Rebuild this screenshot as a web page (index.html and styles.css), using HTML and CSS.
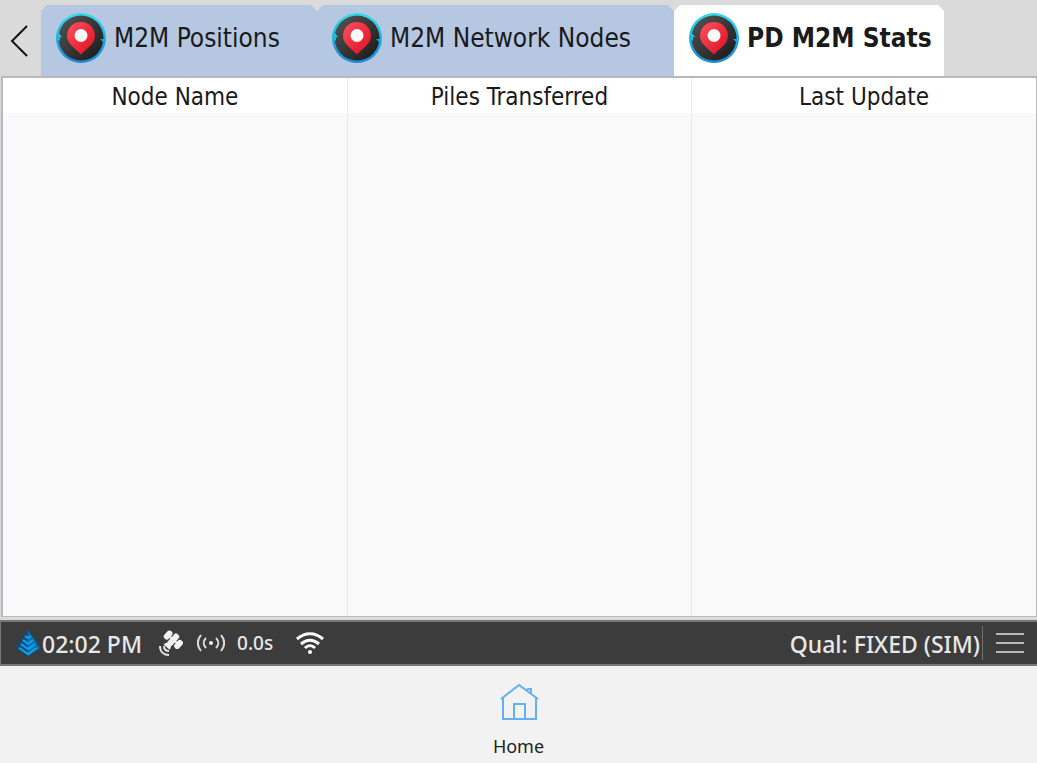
FILE: index.html
```
<!DOCTYPE html>
<html lang="en">
<head>
    <meta charset="UTF-8">
    <meta name="viewport" content="width=device-width, initial-scale=1.0">
    <title>PD M2M Stats</title>
    <link rel="stylesheet" href="styles.css">
</head>
<body>
    <!-- Shared icon for the tabs -->
    <svg class="defs" width="0" height="0" aria-hidden="true">
        <defs>
            <linearGradient id="ringFill" x1="0" y1="0" x2="0" y2="1">
                <stop offset="0" stop-color="#35dcec"/>
                <stop offset="0.5" stop-color="#18b4dc"/>
                <stop offset="1" stop-color="#1c86d6"/>
            </linearGradient>
            <linearGradient id="dialFill" x1="0" y1="0" x2="1" y2="1">
                <stop offset="0.1" stop-color="#505050"/>
                <stop offset="0.9" stop-color="#1e1e1e"/>
            </linearGradient>
            <linearGradient id="pinFill" x1="0" y1="0" x2="1" y2="1">
                <stop offset="0" stop-color="#ff5060"/>
                <stop offset="0.8" stop-color="#e31b2b"/>
            </linearGradient>
            <symbol id="pin" viewBox="0 0 50 50">
                <circle cx="25" cy="25" r="25" fill="url(#ringFill)"/>
                <circle cx="25" cy="25" r="22.500" fill="url(#dialFill)"/>
                <path d="M2 19l4 5-4 1zM1 25l3 0 0 3z" fill="#20c4e4"/>
                <path d="M49 31l-5-5 5 0z" fill="#18a8dc"/>
                <path d="M25 9C17 9 11 15 11 23c0 8 8 12 14 18.500C31 35 39 31 39 23 39 15 33 9 25 9z" fill="url(#pinFill)"/>
                <circle cx="25" cy="22.500" r="6.500" fill="#f8f8f8"/>
            </symbol>
        </defs>
    </svg>

    <header class="tab-bar">
        <button class="back" type="button" aria-label="Back">
            <svg width="18" height="32" viewBox="0 0 18 32"><path d="M17 1L2 16l15 15"/></svg>
        </button>
        <nav class="tabs">
            <button class="tab" type="button"><svg class="tab-icon"><use href="#pin"/></svg>M2M Positions</button>
            <button class="tab" type="button"><svg class="tab-icon"><use href="#pin"/></svg>M2M Network Nodes</button>
            <button class="tab active" type="button"><svg class="tab-icon"><use href="#pin"/></svg>PD M2M Stats</button>
        </nav>
    </header>

    <main class="panel">
        <table class="stats">
            <thead>
                <tr><th>Node Name</th><th>Piles Transferred</th><th>Last Update</th></tr>
            </thead>
            <tbody>
                <tr><td></td><td></td><td></td></tr>
            </tbody>
        </table>
    </main>

    <section class="status-bar">
        <svg class="logo" width="24" height="26" viewBox="0 0 24 26">
            <path d="M12 0L24 18 12 26 0 18z" fill="#0a4f8c"/>
            <path d="M12 0L24 18 12 26z" fill="#0870b0"/>
            <path d="M9 6l3 2 3-2M7 10l5 4 5-4M5 14l7 5 7-5M3 18l9 6 9-6" fill="none" stroke="#10a4ec" stroke-width="2"/>
        </svg>
        <span class="clock">02:02 PM</span>
        <svg class="satellite" width="26" height="26" viewBox="0 0 26 26">
            <g transform="rotate(42 16 9)" fill="#f2f2f2">
                <rect x="6" y="5" width="6" height="10" rx="3"/>
                <rect x="13" y="3" width="6" height="14" rx="2"/>
                <rect x="20" y="5" width="6" height="10" rx="3"/>
                <path d="M11 9h10v2H11zM12 20c0-6 8-6 8 0z"/>
            </g>
            <path d="M6 16c0 3 2 5 5 5M2 16c0 6 4 9 9 9" fill="none" stroke="#e4e4e4" stroke-width="2"/>
        </svg>
        <svg class="radio" width="28" height="18" viewBox="0 0 28 18">
            <circle cx="14" cy="9" r="2" fill="#eee"/>
            <path d="M9 4c-3 3-3 7 0 10M19 4c3 3 3 7 0 10M4 1c-4 5-4 11 0 16M24 1c4 5 4 11 0 16" fill="none" stroke="#ddd" stroke-width="2"/>
        </svg>
        <span class="latency">0.0s</span>
        <svg class="wifi" width="28" height="22" viewBox="0 0 28 22">
            <path d="M1 7c8-7 18-7 26 0M5 12c6-5 12-5 18 0M9 16c3-3 7-3 10 0" fill="none" stroke="#fff" stroke-width="3"/>
            <circle cx="14" cy="20" r="2" fill="#fff"/>
        </svg>
        <span class="quality">Qual: FIXED (SIM)</span>
        <button class="menu" type="button" aria-label="Menu">
            <svg width="28" height="22" viewBox="0 0 28 22"><path d="M0 2h28M0 11h28M0 20h28"/></svg>
        </button>
    </section>

    <footer class="bottom-bar">
        <a class="home" href="#">
            <svg width="40" height="38" viewBox="0 0 40 38">
                <path d="M2 16L20 2l19 14M4 15v21h33V15M15 36V21h11v15M28 7l1-1h3v5"/>
            </svg>
            Home
        </a>
    </footer>
</body>
</html>
```

FILE: styles.css
```
* {
    box-sizing: border-box;
}
body {
    margin: 0;
    min-height: 100vh;
    display: flex;
    flex-direction: column;
    background: #dadada;
    color: #1a1a1a;
    font-family: "DejaVu Sans Condensed", "Noto Sans", sans-serif;
}
button {
    border: none;
    padding: 0;
    background: none;
    color: inherit;
    font: inherit;
    cursor: pointer;
}
.defs {
    position: absolute;
}
.tab-bar {
    display: flex;
    height: 76px;
    padding-top: 5px;
}
.back {
    width: 41px;
}
.back svg {
    display: block;
    margin-left: 10px;
    fill: none;
    stroke: #111;
    stroke-width: 2;
}
.tabs {
    display: grid;
    grid-template-columns: 276px 357px 270px;
}
.tab {
    display: flex;
    align-items: center;
    gap: 8px;
    padding: 0 0 5px 15px;
    background: #b6c7e2;
    font-size: 26px;
    white-space: nowrap;
    clip-path: polygon(0 6px, 6px 0, calc(100% - 6px) 0, 100% 6px, 100% 100%, 0 100%);
}
.tab.active {
    background: #fff;
    font-weight: bold;
}
.tab-icon {
    width: 50px;
    height: 50px;
}
.panel {
    flex: 1;
    display: grid;
    margin: 0 0 3px 1px;
    border: 2px solid #b8b8be;
    border-width: 2px 1px 1px 2px;
    background: #f9f9f9;
}
.stats {
    width: 100%;
    height: 100%;
    table-layout: fixed;
    border-collapse: collapse;
}
.stats th {
    height: 35px;
    padding: 3px 0 0;
    background: #fff;
    font-size: 24px;
    font-weight: normal;
    line-height: 30px;
}
.stats th + th, .stats td + td {
    border-left: 1px solid #e4ecf2;
}
.stats td {
    padding: 0;
}
.status-bar {
    display: flex;
    align-items: center;
    height: 46px;
    padding: 0 13px 0 15px;
    border: 1px solid #777;
    border-width: 2px 0 2px 1px;
    background: #3c3c3c;
    color: #e8e8e8;
    font-family: "Noto Sans", "Open Sans", sans-serif;
    font-weight: 500;
}
.clock, .quality {
    font-size: 23px;
    line-height: 32px;
    padding-top: 2px;
}
.clock {
    margin-left: 2px;
}
.satellite {
    margin-left: 16px;
}
.radio {
    margin-left: 13px;
}
.latency {
    margin-left: 12px;
    font-size: 19px;
}
.wifi {
    margin-left: 23px;
}
.quality {
    margin-left: auto;
}
.menu {
    height: 34px;
    margin-left: 2px;
    padding-left: 13px;
    border-left: 1px solid #707070;
}
.menu svg {
    display: block;
    stroke: #b8b8b8;
    stroke-width: 2;
}
.bottom-bar {
    display: flex;
    justify-content: center;
    height: 97px;
    padding-top: 17px;
    background: #f2f2f2;
}
.home {
    display: flex;
    flex-direction: column;
    align-items: center;
    gap: 12px;
    color: #222;
    font-family: "Noto Sans", "Open Sans", sans-serif;
    font-size: 18px;
    line-height: 26px;
    text-decoration: none;
}
.home svg {
    fill: none;
    stroke: #64b1f2;
    stroke-width: 2;
}
```
